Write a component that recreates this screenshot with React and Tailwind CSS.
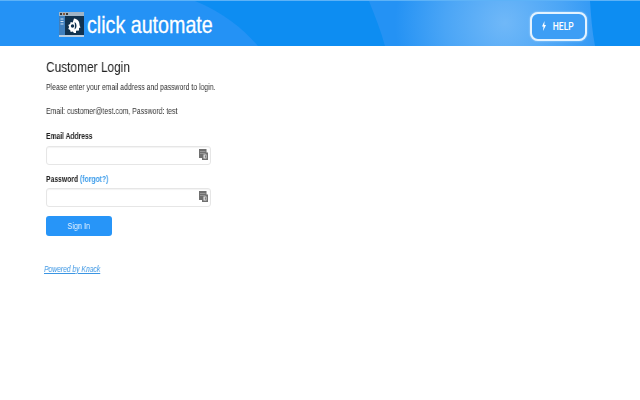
function FillIcon() {
  return (
    <svg width="9" height="11" viewBox="0 0 9 11" className="absolute right-[2px] top-[2px]">
      <path d="M0 0h7.500v3.500H9V11H3V9H0z" fill="#707070" />
      <path d="M1 2.500h5.500M1 4.500h5.500" stroke="#a8a8a8" strokeWidth="0.7" />
      <rect x="4.500" y="5.500" width="3" height="4" fill="#e8e8e8" />
      <rect x="5.800" y="6.300" width="1" height="2.400" fill="#666" />
    </svg>
  );
}

function Field() {
  return (
    <div className="relative w-[165px] h-[19px] bg-white border border-[#e6e6e6] rounded-[3px] shadow-[inset_0_1px_1px_rgba(0,0,0,0.05)]">
      <FillIcon />
    </div>
  );
}

function Logo() {
  return (
    <svg width="25" height="25" viewBox="0 0 25 25">
      <rect x="0" y="0" width="25" height="4" fill="#9fb4c6" />
      <rect x="1" y="1" width="2" height="2" fill="#3a3a3a" />
      <rect x="4" y="1" width="2" height="2" fill="#8a5a3a" />
      <rect x="7" y="1" width="2" height="2" fill="#3a3a3a" />
      <rect x="0" y="4" width="6" height="19" fill="#3f7fbd" />
      <path d="M1.500 7h3M1.500 9.500h3M1.500 12h3" stroke="#cfe3f5" strokeWidth="1" />
      <rect x="6" y="4" width="19" height="19" fill="#10324f" />
      <rect x="0" y="23" width="25" height="2" fill="#b9cfe2" />
      <path d="M15 6.500c3.500.3 5.500 3 5.500 6 0 1.500 1 2.500 1 3l-1.500.5v2.500l-3 .3V21h-2l-1.300-1.500-2 .5-.6-2-1.800-1 .8-2-.8-2 1.800-1 .6-2 2 .5z" fill="#fff" />
      <path d="M15.500 10c1.500.8 2 2.200 2 3.800s-.6 3-2 3.700c.6-2.500.6-5 0-7.500z" fill="#10324f" />
      <circle cx="13.500" cy="14" r="1.700" fill="#10324f" />
    </svg>
  );
}

export default function App() {
  return (
    <div className="min-h-[400px] bg-white font-['Liberation_Sans',Arial,sans-serif]">
      <header className="relative h-[46px] bg-[#0d8df2] border-t border-[#5db2f7] overflow-hidden">
        <svg className="absolute inset-0" width="640" height="45" viewBox="0 0 640 45">
          <defs>
            <radialGradient id="glow" cx="505" cy="22" r="110" gradientUnits="userSpaceOnUse">
              <stop offset="0" stopColor="#70b8f8" />
              <stop offset="0.55" stopColor="#4aa5f6" />
              <stop offset="1" stopColor="#2492f4" />
            </radialGradient>
          </defs>
          <path d="M0 0H195C225 12 245 30 258 45H0z" fill="#2492f5" />
          <path d="M369 0C375 15 381 30 385 45H595C592 30 591 15 590 0H560z" fill="url(#glow)" />
        </svg>
        <div className="relative flex items-center justify-between h-full pl-[59px] pr-[53px]">
          <div className="flex items-center gap-[3px] mt-[2px]">
            <Logo />
            <span className="text-white text-[24px] leading-none scale-x-[0.82] origin-left [-webkit-text-stroke:0.3px_white]">click automate</span>
          </div>
          <button className="flex items-center justify-center gap-[5px] w-[57px] h-[29px] mt-[5px] rounded-[8px] border-2 border-[#e4f3ff] bg-[#3d9ef5] text-white text-[10px] font-medium font-['Roboto',sans-serif] shadow-[0_0_2px_rgba(255,255,255,0.6)]">
            <svg width="4" height="10" viewBox="0 0 4 10"><path d="M2.500 0L0 5.500h1.500L1 10l3-6H2.300z" fill="currentColor" /></svg>
            <span className="scale-x-[0.85]">HELP</span>
          </button>
        </div>
      </header>

      <main className="pl-[46px]">
        <h1 className="mt-[12px] text-[14.5px] leading-[18px] text-[#222] scale-x-[0.82] origin-left will-change-transform">Customer Login</h1>
        <p className="mt-[4px] text-[9px] leading-[14px] text-[#333] scale-x-[0.765] origin-left will-change-transform">Please enter your email address and password to login.</p>
        <p className="mt-[10px] text-[9px] leading-[14px] text-[#333] scale-x-[0.765] origin-left will-change-transform">Email: customer@test.com, Password: test</p>

        <label className="block mt-[12px] mb-[4px] text-[8.5px] font-bold leading-[12px] text-[#222] scale-x-[0.79] origin-left will-change-transform">Email Address</label>
        <Field />

        <label className="block mt-[7px] mb-[2px] text-[8.5px] font-bold leading-[14px] text-[#222] scale-x-[0.8] origin-left will-change-transform">
          Password <a className="text-[#3a9bea]">(forgot?)</a>
        </label>
        <Field />

        <button className="block mt-[9px] w-[66px] h-[20px] rounded-[3px] bg-[#2795f8] text-[#eef7ff] text-[9.5px]">
          <span className="inline-block scale-x-[0.76] will-change-transform">Sign In</span>
        </button>

        <a className="block mt-[27px] -ml-[2px] text-[9px] italic underline text-[#3a95e3] scale-x-[0.75] origin-left will-change-transform">Powered by Knack</a>
      </main>
    </div>
  );
}
